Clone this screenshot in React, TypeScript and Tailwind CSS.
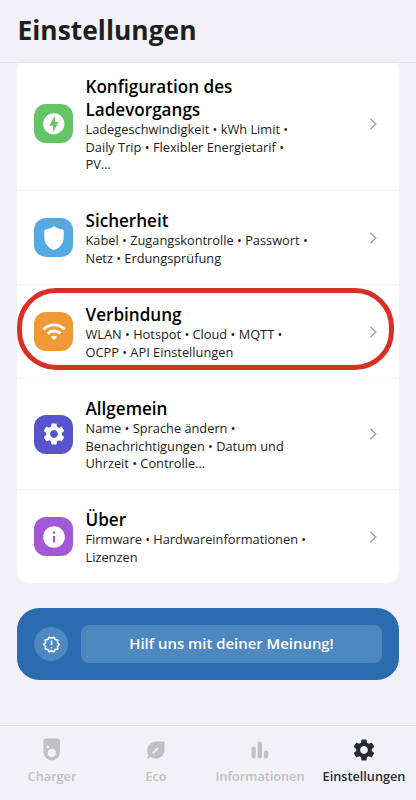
import type { ReactNode } from 'react';
import { MdOfflineBolt, MdSettings, MdInfo, MdOutlineNewReleases } from 'react-icons/md';

type RowProps = {
  icon: ReactNode;
  color: string;
  title: string[];
  lines: string[];
  height: string;
  last?: boolean;
};

function Row({ icon, color, title, lines, height, last }: RowProps) {
  return (
    <div className={`flex shrink-0 items-center pl-[17px] pr-[22px] ${height} ${last ? '' : 'border-b border-[#f4f4f6]'}`}>
      <div className={`flex size-[39px] shrink-0 items-center justify-center rounded-[12px] text-white ${color}`}>{icon}</div>
      <div className="ml-[12.5px] flex-1 whitespace-nowrap pt-px">
        {title.map((t) => (
          <div key={t} className="text-[17.1px] font-semibold leading-[23px] text-black">{t}</div>
        ))}
        <div className="pt-[0.5px]">
          {lines.map((l) => (
            <div key={l} className="text-[12.8px] leading-[17.4px] text-[#1c1c1c]">{l}</div>
          ))}
        </div>
      </div>
      <svg className="h-3 w-[7px] shrink-0" viewBox="0 0 7 12" fill="none" stroke="#a3a3a3" strokeWidth="1.5">
        <path d="M.4.7 5.700 6 .4 11.3" />
      </svg>
    </div>
  );
}

function Tab({ icon, label, active }: { icon: ReactNode; label: string; active?: boolean }) {
  return (
    <div className={`flex w-[104px] flex-col items-center pt-3 ${active ? 'text-[#242b37]' : 'text-[#c1c1c3]'}`}>
      <div className="flex h-6 items-center justify-center">{icon}</div>
      <div className="mt-[5px] whitespace-nowrap text-[12.7px] font-semibold leading-[18px]">{label}</div>
    </div>
  );
}

export default function App() {
  return (
    <div className="flex h-[800px] w-[416px] flex-col overflow-hidden bg-[#f2f1f6] font-['Open_Sans',sans-serif]">
      <header className="h-[63px] shrink-0 border-b border-[#e6e6e8] pl-[17.5px] pt-[11px]">
        <h1 className="text-[26.4px] font-bold leading-[38px] text-[#1f1f1f]">Einstellungen</h1>
      </header>

      <main className="relative flex h-[662px] shrink-0 flex-col overflow-hidden px-[17px]">
        <section className="-mt-[6px] flex shrink-0 flex-col rounded-[12px] bg-white">
          <Row
            color="bg-[#65c466]"
            height="h-[134px]"
            icon={<MdOfflineBolt size={25.6} />}
            title={['Konfiguration des', 'Ladevorgangs']}
            lines={['Ladegeschwindigkeit • kWh Limit •', 'Daily Trip • Flexibler Energietarif •', 'PV...']}
          />
          <Row
            color="bg-[#57a9e1]"
            height="h-[94px]"
            icon={
              <svg width="20" height="24" viewBox="0 0 20 24" fill="currentColor">
                <path d="M10 0C13 2.200 16.300 3.200 19 3.500Q19.700 3.700 19.700 4.800V11.500C19.700 17.500 15.500 22.300 10 24C4.500 22.300 .3 17.500 .3 11.500V4.800Q.3 3.700 1 3.500C3.700 3.200 7 2.200 10 0Z" />
              </svg>
            }
            title={['Sicherheit']}
            lines={['Kabel • Zugangskontrolle • Passwort •', 'Netz • Erdungsprüfung']}
          />
          <Row
            color="bg-[#f09a37]"
            height="h-[94px]"
            icon={
              <svg width="24" height="18" viewBox="0 0 24 18" fill="none" stroke="currentColor" strokeWidth="2.900">
                <path d="M1.500 6.500 C7.500 .3 16.500 .3 22.500 6.500 M5.600 10.700 C9.200 7.100 14.800 7.100 18.400 10.700" />
                <path d="M12 17 8.900 13.900 C10.700 12.300 13.300 12.300 15.100 13.900Z" fill="currentColor" stroke="none" />
              </svg>
            }
            title={['Verbindung']}
            lines={['WLAN • Hotspot • Cloud • MQTT •', 'OCPP • API Einstellungen']}
          />
          <Row
            color="bg-[#5655ce]"
            height="h-[111px]"
            icon={<MdSettings size={26} />}
            title={['Allgemein']}
            lines={['Name • Sprache ändern •', 'Benachrichtigungen • Datum und', 'Uhrzeit • Controlle...']}
          />
          <Row
            last
            color="bg-[#a358d7]"
            height="h-[93px]"
            icon={<MdInfo size={26} />}
            title={['Über']}
            lines={['Firmware • Hardwareinformationen •', 'Lizenzen']}
          />
        </section>

        <div className="absolute left-[17px] top-[225px] h-[82px] w-[377px] rounded-[39px] border-5 border-[#d93025]" />

        <section className="mt-[25px] flex h-[72px] shrink-0 items-center rounded-[22px] bg-[#2d6bb1] px-[17px]">
          <div className="flex size-[34px] items-center justify-center rounded-full bg-[#4d88c0] text-white">
            <MdOutlineNewReleases size={19} />
          </div>
          <div className="ml-[13px] flex h-[38px] flex-1 items-center justify-center rounded-[8px] bg-[#4d88c0] pb-px text-[14.900px] font-semibold text-white">
            Hilf uns mit deiner Meinung!
          </div>
        </section>
      </main>

      <nav className="flex h-[75px] shrink-0 border-t border-[#dededf]">
        <Tab
          label="Charger"
          icon={
            <svg width="18" height="24" viewBox="0 0 18 24">
              <path d="M3 .5H14.500Q17 .5 17 3V15A8.300 8.300 0 0 1 .5 15V3Q.5 .5 3 .5Z" fill="currentColor" />
              <circle cx="8.800" cy="14.800" r="4.300" fill="#f2f1f6" />
              <circle cx="4.900" cy="9" r="1.300" fill="#f2f1f6" />
            </svg>
          }
        />
        <Tab
          label="Eco"
          icon={
            <svg width="18" height="18" viewBox="0 0 18 18">
              <path d="M17.500 .5V9C17.500 16.500 9.500 20 3.300 16L1.300 18 0 16.700 1.500 15C-2 8 1.800 .5 9.500 .5Z" fill="currentColor" />
              <path d="M5.700 12.400 11 7" stroke="#f2f1f6" strokeWidth="2" />
            </svg>
          }
        />
        <Tab
          label="Informationen"
          icon={
            <svg width="18" height="18" viewBox="0 0 18 18" fill="currentColor">
              <rect x="0.500" y="5.500" width="4.300" height="12" rx="2" />
              <rect x="6.700" y=".5" width="4.300" height="17" rx="2" />
              <rect x="12.900" y="9.500" width="4.300" height="8" rx="2" />
            </svg>
          }
        />
        <Tab active label="Einstellungen" icon={<MdSettings size={26} />} />
      </nav>
    </div>
  );
}
